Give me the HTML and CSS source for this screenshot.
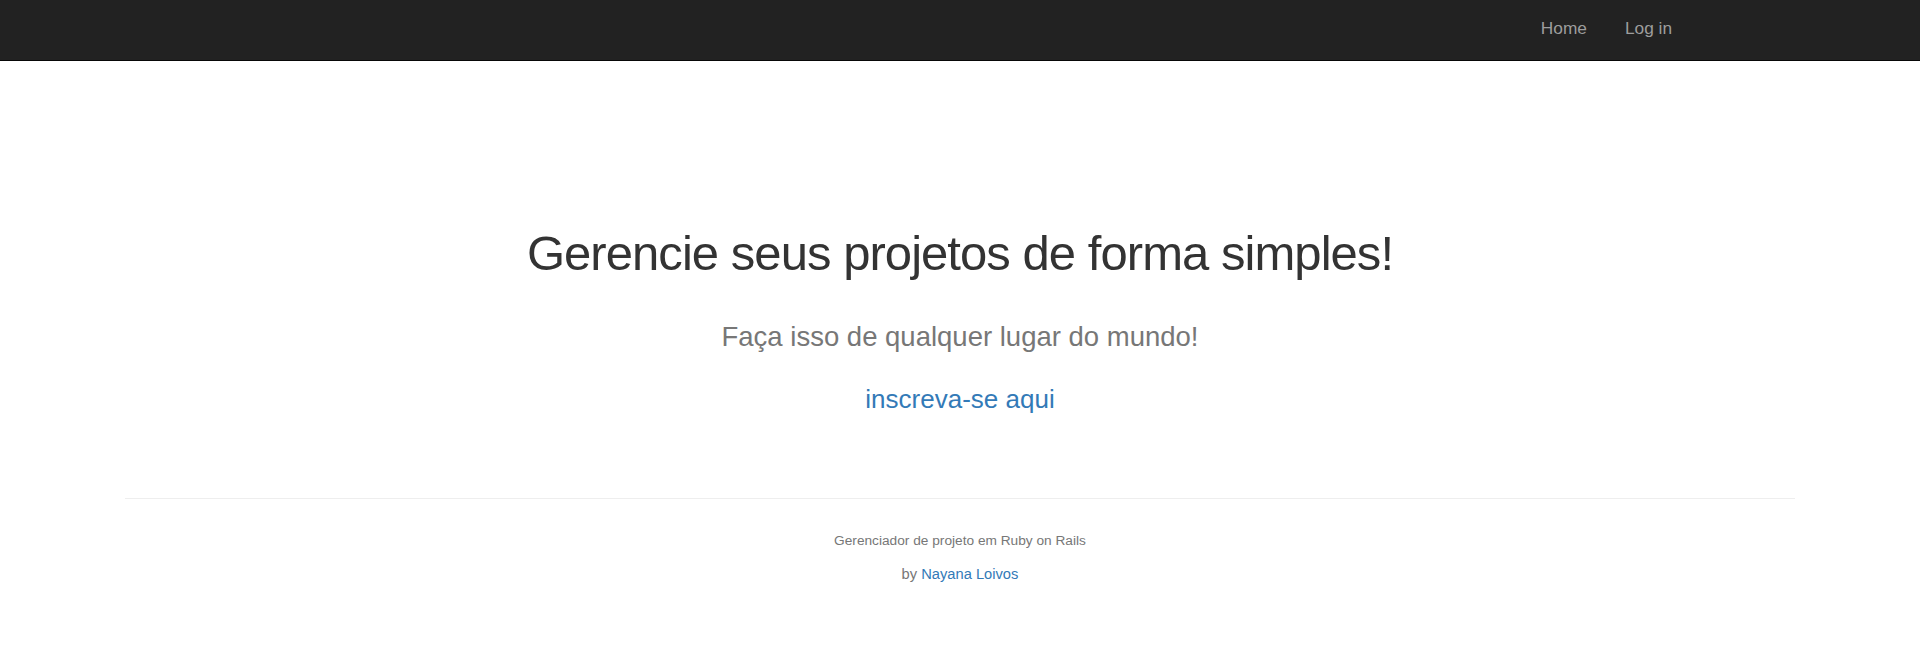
FILE: index.html
```html
<!DOCTYPE html>
<html lang="pt-BR">
<head>
<meta charset="utf-8">
<title>Gerenciador de projetos</title>
<link rel="stylesheet" href="styles.css">
</head>
<body>
<nav class="navbar">
  <div class="navbar-inner">
    <ul class="nav-links">
      <li><a href="#">Home</a></li>
      <li><a href="#">Log in</a></li>
    </ul>
  </div>
</nav>
<main class="hero">
  <h1 class="hero-title">Gerencie seus projetos de forma simples!</h1>
  <p class="hero-lead">Faça isso de qualquer lugar do mundo!</p>
  <p class="hero-cta"><a href="#">inscreva-se aqui</a></p>
</main>
<footer class="footer">
  <hr class="footer-rule">
  <p class="footer-line">Gerenciador de projeto em Ruby on Rails</p>
  <p class="footer-line footer-credit">by <a href="#">Nayana Loivos</a></p>
</footer>
</body>
</html>
```

FILE: styles.css
```css
* { box-sizing: border-box; }
html, body { margin: 0; padding: 0; }
body {
  font-family: "Liberation Sans", Arial, sans-serif;
  background: #fff;
  color: #333;
}
a { text-decoration: none; }

.navbar {
  height: 61px;
  background: #222;
  border-bottom: 1px solid #080808;
}
.navbar-inner {
  display: flex;
  justify-content: flex-end;
  height: 100%;
  padding-right: 248px;
}
.nav-links {
  display: flex;
  list-style: none;
  margin: 0;
  padding: 0;
  gap: 38px;
}
.nav-links a {
  display: block;
  color: #9d9d9d;
  font-size: 17.3px;
  line-height: 20px;
  padding-top: 18px;
}

.hero {
  text-align: center;
  padding-top: 165px;
}
.hero-title {
  margin: 0;
  font-size: 49px;
  font-weight: 400;
  line-height: 54px;
  letter-spacing: -0.95px;
  color: #333;
}
.hero-lead {
  margin: 38px 0 0;
  font-size: 27.5px;
  line-height: 38px;
  color: #777;
}
.hero-cta {
  margin: 25px 0 0;
  font-size: 26px;
  line-height: 36px;
}
.hero-cta a { color: #337ab7; }

.footer {
  text-align: center;
  padding: 0 125px;
}
.footer-rule {
  margin: 81px 0 0;
  border: 0;
  border-top: 1px solid #eee;
  height: 0;
}
.footer-line {
  margin: 32px 0 0;
  font-size: 13.7px;
  line-height: 20px;
  color: #777;
}
.footer-credit {
  margin-top: 13px;
  font-size: 14.7px;
}
.footer-line a { color: #337ab7; }
```
